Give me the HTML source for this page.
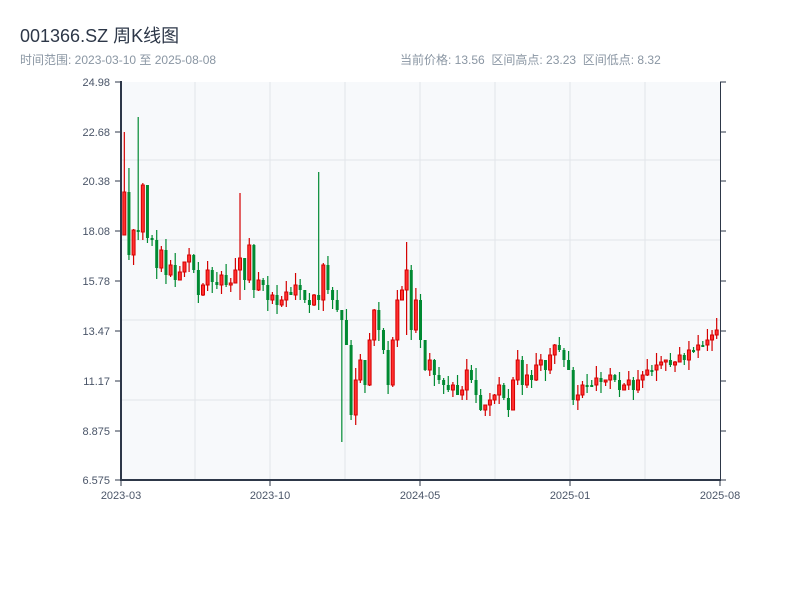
<!DOCTYPE html>
<html><head><meta charset="utf-8"><style>
body{margin:0;width:800px;height:600px;background:#fff;font-family:"Liberation Sans","Noto Sans CJK SC",sans-serif;overflow:hidden;position:relative}
.t{position:absolute;left:20px;top:22px;font-size:18px;color:#2d3748}
.s{position:absolute;top:51px;font-size:12px;color:#8a96a3}
</style></head><body>
<div class="t">001366.SZ 周K线图</div>
<div class="s" style="left:20px">时间范围: 2023-03-10 至 2025-08-08</div>
<div class="s" style="left:400px">当前价格: 13.56&nbsp;&nbsp;区间高点: 23.23&nbsp;&nbsp;区间低点: 8.32</div>
<svg id="c" width="800" height="600" style="position:absolute;left:0;top:0" xmlns="http://www.w3.org/2000/svg"></svg>
<script>
(function(){
var s='';
s+='<rect x="121" y="82" width="599" height="398" fill="#f7f9fb"/>';
[195,270,345,420,495,570,645].forEach(function(x){s+='<line x1="'+x+'" y1="82" x2="'+x+'" y2="480" stroke="#e2e5ea" stroke-width="1"/>';});
[160,240,320,400].forEach(function(y){s+='<line x1="121" y1="'+y+'" x2="720" y2="'+y+'" stroke="#e2e5ea" stroke-width="1"/>';});
var closes=[192,255,230,232,185,238,240,268,250,275,265,280,272,262,255,270,
295,285,270,282,285,275,285,283,270,258,280,245,290,280,285,300,
295,305,300,292,295,285,290,300,305,295,300,265,290,300,310,320,
345,415,380,360,385,340,310,330,350,385,340,300,290,270,330,300,
340,370,360,375,380,385,390,385,395,390,370,380,395,410,405,400,
395,385,398,410,380,360,385,375,380,365,360,370,355,345,350,360,
370,400,395,385,385,385,378,382,380,375,380,390,385,380,390,380,
375,370,370,365,362,360,365,362,355,360,350,350,345,345,340,335,330];
var ov={0:[132,220],1:[168,255],3:[117,240],5:[200,243],25:[193,300],42:[172,310],47:[310,442],61:[242,335]};
var n=closes.length,step=597/n,prev=235;
for(var i=0;i<n;i++){
 var c=closes[i],o=prev,x=122+i*step+step/2;
 var bt=Math.min(o,c),bb=Math.max(o,c);
 var e1=(i*7)%13,e2=(i*5)%12;
 var hi=bt-e1,lo=bb+e2;
 if(ov[i]){hi=ov[i][0];lo=Math.max(lo,ov[i][1]);}
 var up=c<o;var col=up?'#d40000':'#008a32';
 if(bb-bt<2)bb=bt+2;
 s+='<line x1="'+x+'" y1="'+hi+'" x2="'+x+'" y2="'+lo+'" stroke="'+col+'" stroke-width="1.2"/>';
 if(up)s+='<rect x="'+(x-1.5)+'" y="'+bt+'" width="3" height="'+(bb-bt)+'" fill="#ff3030" stroke="'+col+'" stroke-width="1"/>';
 else s+='<rect x="'+(x-1.5)+'" y="'+bt+'" width="3" height="'+(bb-bt)+'" fill="'+col+'"/>';
 prev=c;
}
s+='<line x1="121" y1="81" x2="121" y2="481" stroke="#2d3748" stroke-width="2"/>';
s+='<line x1="120" y1="480" x2="721" y2="480" stroke="#2d3748" stroke-width="2"/>';
s+='<line x1="720.5" y1="82" x2="720.5" y2="480" stroke="#2d3748" stroke-width="1"/>';
var yl=[['24.98',82],['22.68',132],['20.38',181],['18.08',231],['15.78',281],['13.47',331],['11.17',381],['8.875',431],['6.575',480]];
yl.forEach(function(a){s+='<line x1="115" y1="'+a[1]+'" x2="121" y2="'+a[1]+'" stroke="#2d3748"/><line x1="720" y1="'+a[1]+'" x2="726" y2="'+a[1]+'" stroke="#2d3748"/>';
s+='<text x="110" y="'+(a[1]+4)+'" text-anchor="end" font-size="11" fill="#4a5568" font-family="Liberation Sans,sans-serif">'+a[0]+'</text>';});
[['2023-03',121],['2023-10',270],['2024-05',420],['2025-01',570],['2025-08',720]].forEach(function(a){
s+='<line x1="'+a[1]+'" y1="480" x2="'+a[1]+'" y2="486" stroke="#2d3748"/>';
s+='<text x="'+a[1]+'" y="499" text-anchor="middle" font-size="11" fill="#4a5568" font-family="Liberation Sans,sans-serif">'+a[0]+'</text>';});
document.getElementById('c').innerHTML=s;
})();
</script>
</body></html>
